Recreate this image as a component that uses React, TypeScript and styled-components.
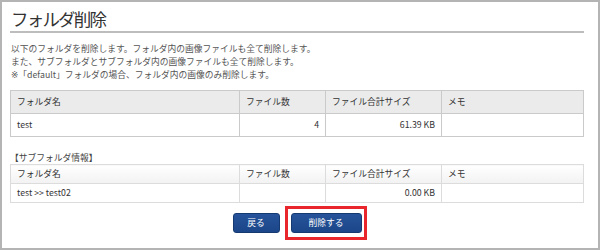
import React from 'react';
import styled, { createGlobalStyle } from 'styled-components';

const GlobalStyle = createGlobalStyle`
  html, body {
    margin: 0;
    padding: 0;
    background: #fff;
  }
  body {
    font-family: "Noto Sans CJK JP", "Noto Sans", sans-serif;
    color: #444;
  }
`;

const Frame = styled.div`
  box-sizing: border-box;
  width: 600px;
  height: 250px;
  border: 2px solid #b4b4b4;
  padding: 5px 14px 0 8px;
  display: flex;
  flex-direction: column;
`;

const Title = styled.h1`
  margin: 0;
  font-size: 17.5px;
  letter-spacing: -1.8px;
  line-height: 24px;
  font-weight: 400;
  color: #333;
  padding-left: 1px;
  border-bottom: 2px solid #bdbdbd;
`;

const Lead = styled.p`
  margin: 9px 0 0;
  padding-left: 1px;
  font-size: 8.75px;
  line-height: 13px;
  color: #555;
`;

const Mark = styled.span`
  font-family: "DejaVu Sans", sans-serif;
  color: #555;
`;

const Label = styled.div`
  margin-top: 14px;
  font-size: 8.75px;
  line-height: 13px;
  color: #444;
`;

interface TableProps {
  sub?: boolean;
}

const Table = styled.table<TableProps>`
  width: 100%;
  border-collapse: collapse;
  table-layout: fixed;
  margin-top: ${(p) => (p.sub ? '0' : '8px')};
  font-size: 8.75px;
  color: #333;

  th, td {
    border: 1px solid ${(p) => (p.sub ? '#dcdcdc' : '#cacaca')};
    padding: 0 6px;
    height: ${(p) => (p.sub ? '18px' : '22px')};
    line-height: 12px;
    font-weight: 400;
    text-align: left;
  }
  th {
    background: ${(p) => (p.sub ? 'linear-gradient(#ffffff, #f2f2f2)' : '#ebebeb')};
  }
`;

const Num = styled.td`
  && {
    text-align: right;
  }
`;

const Buttons = styled.div`
  display: flex;
  justify-content: center;
  gap: 11px;
  margin-top: 10px;
`;

interface ButtonProps {
  wide?: boolean;
}

const Button = styled.button<ButtonProps>`
  box-sizing: border-box;
  width: ${(p) => (p.wide ? '71px' : '47px')};
  height: 20px;
  padding: 0;
  border: 1px solid #153a72;
  border-radius: 3px;
  background: linear-gradient(#26539a, #1c4689);
  color: #fff;
  font-family: inherit;
  font-size: 8.75px;
  line-height: 18px;
`;

const Highlight = styled.span`
  position: relative;
  display: inline-flex;

  &::after {
    content: '';
    position: absolute;
    top: -7px;
    bottom: -7px;
    left: -6px;
    right: -5px;
    border: 3px solid #e8262b;
    pointer-events: none;
  }
`;

const cols = ['229px', '86px', '116px', 'auto'];

const Cols = () => (
  <colgroup>
    {cols.map((w, i) => (
      <col key={i} style={{ width: w }} />
    ))}
  </colgroup>
);

const App: React.FC = () => (
  <>
    <GlobalStyle />
    <Frame>
      <Title>フォルダ削除</Title>
      <Lead>
        以下のフォルダを削除します。フォルダ内の画像ファイルも全て削除します。
        <br />
        また、サブフォルダとサブフォルダ内の画像ファイルも全て削除します。
        <br />
        <Mark>※</Mark>「default」フォルダの場合、フォルダ内の画像のみ削除します。
      </Lead>
      <Table>
        <Cols />
        <thead>
          <tr>
            <th>フォルダ名</th>
            <th>ファイル数</th>
            <th>ファイル合計サイズ</th>
            <th>メモ</th>
          </tr>
        </thead>
        <tbody>
          <tr>
            <td>test</td>
            <Num>4</Num>
            <Num>61.39 KB</Num>
            <td />
          </tr>
        </tbody>
      </Table>
      <Label>【サブフォルダ情報】</Label>
      <Table sub>
        <Cols />
        <thead>
          <tr>
            <th>フォルダ名</th>
            <th>ファイル数</th>
            <th>ファイル合計サイズ</th>
            <th>メモ</th>
          </tr>
        </thead>
        <tbody>
          <tr>
            <td>test &gt;&gt; test02</td>
            <td />
            <Num>0.00 KB</Num>
            <td />
          </tr>
        </tbody>
      </Table>
      <Buttons>
        <Button>戻る</Button>
        <Highlight>
          <Button wide>削除する</Button>
        </Highlight>
      </Buttons>
    </Frame>
  </>
);

export default App;
